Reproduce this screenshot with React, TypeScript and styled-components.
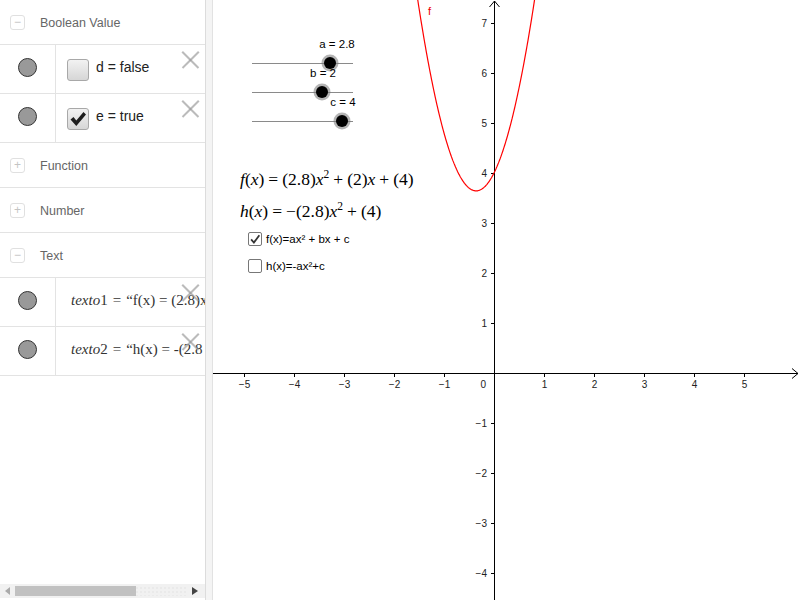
import React from 'react';
import styled, { createGlobalStyle } from 'styled-components';

const GlobalStyle = createGlobalStyle`
  html, body {
    margin: 0;
    padding: 0;
    background: #fff;
    font-family: "Liberation Sans", Arial, sans-serif;
  }
  #root {
    width: 800px;
    height: 600px;
  }
`;

// graph coordinate system (local to the graphics view)
const ORIGIN_X = 281;
const ORIGIN_Y = 373;
const SCALE = 50;
const VIEW_W = 587;
const VIEW_H = 600;

const a = 2.8;
const b = 2;
const c = 4;

const toPx = (x: number) => ORIGIN_X + x * SCALE;
const toPy = (y: number) => ORIGIN_Y - y * SCALE;

const buildCurve = () => {
  const pts: string[] = [];
  for (let px = 190; px <= 340; px += 0.5) {
    const x = (px - ORIGIN_X) / SCALE;
    const y = a * x * x + b * x + c;
    const py = toPy(y);
    if (py < -20) continue;
    pts.push(`${px.toFixed(1)},${py.toFixed(1)}`);
  }
  return 'M' + pts.join(' L');
};

interface SliderDef {
  name: string;
  label: string;
  y: number;
  knob: number;
  labelX: number;
}

const sliders: SliderDef[] = [
  { name: 'a', label: 'a = 2.8', y: 63, knob: 117, labelX: 124 },
  { name: 'b', label: 'b = 2', y: 92, knob: 109, labelX: 110 },
  { name: 'c', label: 'c = 4', y: 121, knob: 129, labelX: 130 },
];

const App: React.FC = () => {
  const xTicks = [-5, -4, -3, -2, -1, 1, 2, 3, 4, 5];
  const yTicks = [-4, -3, -2, -1, 1, 2, 3, 4, 5, 6, 7];

  return (
    <>
      <GlobalStyle />
      <Page>
        <AlgebraPanel>
          <AlgebraList>
            <GroupHeader>
              <CollapseBox>−</CollapseBox>
              <GroupTitle>Boolean Value</GroupTitle>
            </GroupHeader>
            <ItemRow>
              <MarbleCell><Marble /></MarbleCell>
              <ItemContent>
                <BoolBox />
                <ItemText>d = false</ItemText>
              </ItemContent>
              <DeleteIcon />
            </ItemRow>
            <ItemRow>
              <MarbleCell><Marble /></MarbleCell>
              <ItemContent>
                <BoolBox>
                  <svg width="20" height="20" viewBox="0 0 20 20">
                    <path d="M2.5 10.5 L5.5 8 L8.3 11.5 L15.5 3 L18 5.5 L8.3 17 Z" fill="#1e1e1e" />
                  </svg>
                </BoolBox>
                <ItemText>e = true</ItemText>
              </ItemContent>
              <DeleteIcon />
            </ItemRow>
            <GroupHeader>
              <CollapseBox>+</CollapseBox>
              <GroupTitle>Function</GroupTitle>
            </GroupHeader>
            <GroupHeader>
              <CollapseBox>+</CollapseBox>
              <GroupTitle>Number</GroupTitle>
            </GroupHeader>
            <GroupHeader>
              <CollapseBox>−</CollapseBox>
              <GroupTitle>Text</GroupTitle>
            </GroupHeader>
            <ItemRow>
              <MarbleCell><Marble /></MarbleCell>
              <ItemContent>
                <SerifText><i>texto</i>1<MathEq>=</MathEq>“f(x) = (2.8)x</SerifText>
              </ItemContent>
              <DeleteIcon />
            </ItemRow>
            <ItemRow>
              <MarbleCell><Marble /></MarbleCell>
              <ItemContent>
                <SerifText><i>texto</i>2<MathEq>=</MathEq>“h(x) = -(2.8</SerifText>
              </ItemContent>
              <DeleteIcon />
            </ItemRow>
          </AlgebraList>
          <HScrollBar>
            <ScrollArrow>
              <svg width="6" height="8" viewBox="0 0 6 8"><path d="M5 0 L0 4 L5 8 Z" fill="#aaa" /></svg>
            </ScrollArrow>
            <ScrollTrack>
              <ScrollThumb />
            </ScrollTrack>
            <ScrollArrow>
              <svg width="6" height="8" viewBox="0 0 6 8"><path d="M0 0 L6 4 L0 8 Z" fill="#444" /></svg>
            </ScrollArrow>
          </HScrollBar>
        </AlgebraPanel>
        <Splitter />
        <Graphics>
          <svg width={VIEW_W} height={VIEW_H} viewBox={`0 0 ${VIEW_W} ${VIEW_H}`}>
            {/* axes */}
            <line x1={0} y1={ORIGIN_Y + 0.5} x2={VIEW_W - 2} y2={ORIGIN_Y + 0.5} stroke="#000" strokeWidth={1} />
            <path d={`M${VIEW_W - 8} ${ORIGIN_Y - 4.5} L${VIEW_W - 2} ${ORIGIN_Y + 0.5} L${VIEW_W - 8} ${ORIGIN_Y + 5.5}`} fill="none" stroke="#000" strokeWidth={1} />
            <line x1={ORIGIN_X + 0.5} y1={1} x2={ORIGIN_X + 0.5} y2={VIEW_H} stroke="#000" strokeWidth={1} />
            <path d={`M${ORIGIN_X - 4.5} 7 L${ORIGIN_X + 0.5} 1 L${ORIGIN_X + 5.5} 7`} fill="none" stroke="#000" strokeWidth={1} />
            {xTicks.map((t) => (
              <g key={`x${t}`}>
                <line x1={toPx(t) + 0.5} y1={ORIGIN_Y} x2={toPx(t) + 0.5} y2={ORIGIN_Y + 4} stroke="#000" />
                <text x={toPx(t) + 0.5} y={ORIGIN_Y + 15} fontSize="10" fill="#222" textAnchor="middle" fontFamily='"Liberation Sans", Arial, sans-serif'>
                  {t < 0 ? `−${-t}` : t}
                </text>
              </g>
            ))}
            <text x={ORIGIN_X - 8} y={ORIGIN_Y + 15} fontSize="10" fill="#222" textAnchor="end" fontFamily='"Liberation Sans", Arial, sans-serif'>0</text>
            {yTicks.map((t) => (
              <g key={`y${t}`}>
                <line x1={ORIGIN_X - 3} y1={toPy(t) + 0.5} x2={ORIGIN_X} y2={toPy(t) + 0.5} stroke="#000" />
                <text x={ORIGIN_X - 7} y={toPy(t) + 4} fontSize="10" fill="#222" textAnchor="end" fontFamily='"Liberation Sans", Arial, sans-serif'>
                  {t < 0 ? `−${-t}` : t}
                </text>
              </g>
            ))}
            {/* function */}
            <path d={buildCurve()} fill="none" stroke="#f00" strokeWidth={1.2} />
            <text x={215} y={15} fontSize="11" fill="#e00" fontFamily='"Liberation Sans", Arial, sans-serif'>f</text>
            {/* sliders */}
            {sliders.map((s) => (
              <g key={s.name}>
                <line x1={39} y1={s.y + 0.5} x2={140} y2={s.y + 0.5} stroke="#8a8a8a" strokeWidth={1} />
                <circle cx={s.knob} cy={s.y} r={8.5} fill="#777" opacity={0.55} />
                <circle cx={s.knob} cy={s.y} r={6} fill="#000" />
                <text x={s.labelX} y={s.y - 15} fontSize="11.5" fill="#000" textAnchor="middle" fontFamily='"Liberation Sans", Arial, sans-serif'>
                  {s.label}
                </text>
              </g>
            ))}
          </svg>

          <Formula $top={169}>
            <Var>f</Var>(<Var>x</Var>)<Op>=</Op>(2.8)<Var>x</Var><Sup>2</Sup><Op>+</Op>(2)<Var>x</Var><Op>+</Op>(4)
          </Formula>
          <Formula $top={201}>
            <Var>h</Var>(<Var>x</Var>)<Op>=</Op>−(2.8)<Var>x</Var><Sup>2</Sup><Op>+</Op>(4)
          </Formula>

          <CheckRow $top={232}>
            <GraphCheck>
              <svg width="13" height="13" viewBox="0 0 13 13">
                <path d="M2.3 6.3 L5.3 9.8 L11.2 1.8" fill="none" stroke="#333" strokeWidth="1.9" />
              </svg>
            </GraphCheck>
            <CheckLabel>f(x)=ax² + bx + c</CheckLabel>
          </CheckRow>
          <CheckRow $top={259}>
            <GraphCheck />
            <CheckLabel>h(x)=-ax²+c</CheckLabel>
          </CheckRow>
        </Graphics>
      </Page>
    </>
  );
};

const Page = styled.div`
  display: flex;
  width: 800px;
  height: 600px;
  overflow: hidden;
  background: #fff;
`;

const AlgebraPanel = styled.div`
  width: 205px;
  height: 600px;
  border-right: 1px solid #dcdcdc;
  display: flex;
  flex-direction: column;
  background: #fff;
`;

const AlgebraList = styled.div`
  flex: 1;
  display: flex;
  flex-direction: column;
  overflow: hidden;
`;

const GroupHeader = styled.div`
  height: 45px;
  box-sizing: border-box;
  padding-top: 2px;
  border-bottom: 1px solid #e3e3e3;
  display: flex;
  align-items: center;
  padding-left: 10px;
  gap: 15px;
  flex-shrink: 0;
`;

const CollapseBox = styled.div`
  width: 13px;
  height: 13px;
  border: 1px solid #e0e0e0;
  border-radius: 3px;
  display: flex;
  align-items: center;
  justify-content: center;
  font-size: 12px;
  line-height: 1;
  color: #c4c4c4;
  margin-top: -2px;
`;

const GroupTitle = styled.div`
  font-size: 12.5px;
  color: #666;
`;

const ItemRow = styled.div`
  position: relative;
  height: 49px;
  box-sizing: border-box;
  padding-bottom: 3px;
  border-bottom: 1px solid #e3e3e3;
  display: flex;
  flex-shrink: 0;
`;

const MarbleCell = styled.div`
  width: 55px;
  margin-bottom: -3px;
  padding-bottom: 3px;
  border-right: 1px solid #e3e3e3;
  display: flex;
  align-items: center;
  justify-content: center;
`;

const Marble = styled.div`
  width: 17px;
  height: 17px;
  border-radius: 50%;
  background: #999;
  border: 1px solid #333;
`;

const ItemContent = styled.div`
  flex: 1;
  display: flex;
  align-items: center;
  padding-left: 11px;
  gap: 7px;
  overflow: hidden;
  white-space: nowrap;
`;

const BoolBox = styled.div`
  width: 20px;
  height: 20px;
  border: 1px solid #a8a8a8;
  border-radius: 3px;
  background: linear-gradient(#f2f2f2, #d6d6d6);
  display: flex;
  align-items: center;
  justify-content: center;
  margin-top: 5px;
`;

const ItemText = styled.div`
  font-size: 14px;
  color: #222;
  margin-bottom: 2px;
`;

const SerifText = styled.div`
  font-family: "Liberation Serif", "Times New Roman", serif;
  font-size: 15px;
  color: #333;
  padding-left: 4px;

  i {
    font-style: italic;
  }
`;

const MathEq = styled.span`
  margin: 0 5px;
`;

const DeleteIcon = styled.div`
  position: absolute;
  top: 6px;
  right: 6px;
  width: 17px;
  height: 17px;

  &::before,
  &::after {
    content: '';
    position: absolute;
    left: -3px;
    top: 8px;
    width: 23px;
    height: 1.6px;
    background: rgba(150, 150, 150, 0.65);
    transform: rotate(45deg);
  }

  &::after {
    transform: rotate(-45deg);
  }
`;

const HScrollBar = styled.div`
  height: 14px;
  margin-bottom: 2px;
  background: #f1f1f1;
  display: flex;
  align-items: center;
  padding-right: 3px;
`;

const ScrollArrow = styled.div`
  width: 15px;
  display: flex;
  align-items: center;
  justify-content: center;
`;

const ScrollTrack = styled.div`
  flex: 1;
  height: 10px;
  background-image: radial-gradient(#e2e2e2 0.6px, transparent 0.8px);
  background-size: 4px 4px;
`;

const ScrollThumb = styled.div`
  width: 121px;
  height: 10px;
  background: #c1c1c1;
`;

const Splitter = styled.div`
  width: 6px;
  height: 600px;
  background: #f4f4f4;
  border-right: 1px solid #e2e2e2;
`;

const Graphics = styled.div`
  position: relative;
  flex: 1;
  height: 600px;
  overflow: hidden;

  svg {
    display: block;
  }
`;

const Formula = styled.div<{ $top: number }>`
  position: absolute;
  left: 27px;
  top: ${(p) => p.$top}px;
  font-family: "Liberation Serif", "Times New Roman", serif;
  font-size: 17.5px;
  color: #000;
  white-space: nowrap;
`;

const Var = styled.span`
  font-style: italic;
`;

const Op = styled.span`
  margin: 0 4px;
`;

const Sup = styled.sup`
  font-size: 11.5px;
  vertical-align: 7px;
  line-height: 0;
`;

const CheckRow = styled.div<{ $top: number }>`
  position: absolute;
  left: 35px;
  top: ${(p) => p.$top}px;
  display: flex;
  align-items: center;
  gap: 4px;
`;

const GraphCheck = styled.div`
  width: 12px;
  height: 12px;
  border: 1px solid #777;
  border-radius: 2px;
  background: #fff;
  display: flex;
  align-items: center;
  justify-content: center;
`;

const CheckLabel = styled.div`
  font-size: 11.5px;
  color: #000;
`;

export default App;
